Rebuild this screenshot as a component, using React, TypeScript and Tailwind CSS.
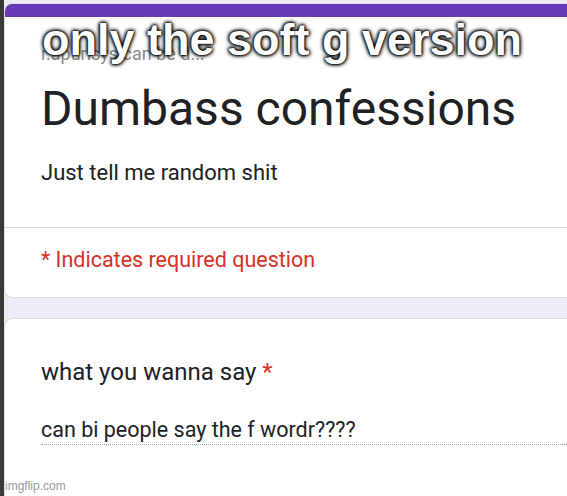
export default function App() {
  return (
    <div className="relative h-[496px] w-[567px] overflow-hidden bg-[#f0ebf8] font-['Roboto',sans-serif] text-[#202124]">
      <div className="flex h-full">
        <div className="w-[4px] shrink-0 bg-[#3a3a3a]" />
        <div className="flex min-w-0 flex-1 flex-col pt-[3px]">
          <div className="-mr-4 overflow-hidden rounded-l-lg border border-r-0 border-[#dadce0] bg-white">
            <div className="h-[13px] bg-[#673ab7]" />
            <div className="pl-9">
              <p className="mt-[26px] text-[18px] leading-[22px] text-[#8a8a8a]">r.apurisys can be d...</p>
              <h1 className="mt-[16px] whitespace-nowrap text-[48px] leading-[56px]">Dumbass confessions</h1>
              <p className="mt-[23px] text-[22px] leading-[26px]">Just tell me random shit</p>
            </div>
            <div className="mt-[41px] border-t border-[#dadce0]" />
            <p className="pl-9 pt-[19px] pb-[24px] text-[21.5px] leading-[26px] text-[#d93025]">* Indicates required question</p>
          </div>
          <div className="-mr-4 mt-[20px] flex-1 rounded-tl-lg border border-r-0 border-b-0 border-[#dadce0] bg-white pl-9">
            <p className="mt-[39px] text-[24px] leading-[28px]">
              what you wanna say <span className="text-[#d93025]">*</span>
            </p>
            <p className="mt-[31px] border-b border-dotted border-[#9aa0a6] pb-[1px] text-[21.5px] leading-[26px]">can bi people say the f wordr????</p>
          </div>
        </div>
      </div>
      <div className="absolute left-[42px] top-[12px] font-['Liberation_Sans',Arial,sans-serif] text-[45px] leading-[56px] font-bold text-white [text-shadow:0_0_2px_#000,0_0_3px_#000,0_0_4px_#000,0_0_5px_#000]">
        only the soft g version
      </div>
      <div className="absolute bottom-[3px] left-[5px] font-['Liberation_Sans',Arial,sans-serif] text-[12px] leading-[14px] text-[#9a9a9a]">
        imgflip.com
      </div>
    </div>
  );
}
